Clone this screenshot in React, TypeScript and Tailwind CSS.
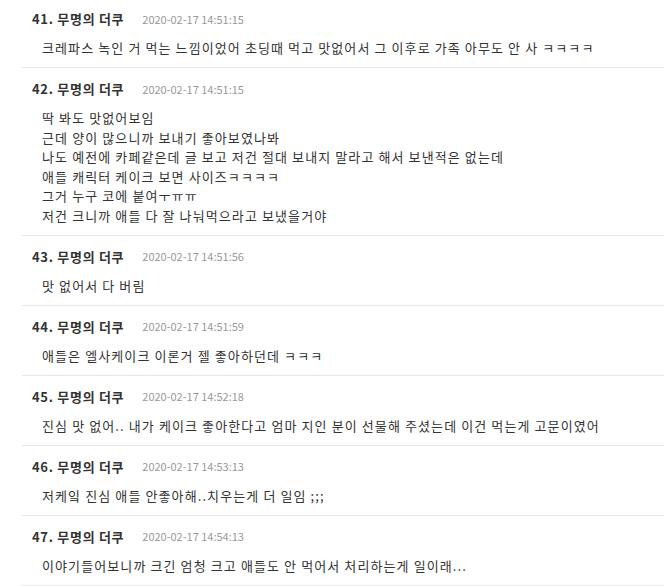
import React from "react";

type Item = { n: number; date: string; lines: string[] };

const items: Item[] = [
  { n: 41, date: "2020-02-17 14:51:15", lines: ["크레파스 녹인 거 먹는 느낌이었어 초딩때 먹고 맛없어서 그 이후로 가족 아무도 안 사 ㅋㅋㅋㅋ"] },
  {
    n: 42,
    date: "2020-02-17 14:51:15",
    lines: [
      "딱 봐도 맛없어보임",
      "근데 양이 많으니까 보내기 좋아보였나봐",
      "나도 예전에 카페같은데 글 보고 저건 절대 보내지 말라고 해서 보낸적은 없는데",
      "애들 캐릭터 케이크 보면 사이즈ㅋㅋㅋㅋ",
      "그거 누구 코에 붙여ㅜㅠㅠ",
      "저건 크니까 애들 다 잘 나눠먹으라고 보냈을거야",
    ],
  },
  { n: 43, date: "2020-02-17 14:51:56", lines: ["맛 없어서 다 버림"] },
  { n: 44, date: "2020-02-17 14:51:59", lines: ["애들은 엘사케이크 이론거 젤 좋아하던데 ㅋㅋㅋ"] },
  { n: 45, date: "2020-02-17 14:52:18", lines: ["진심 맛 없어.. 내가 케이크 좋아한다고 엄마 지인 분이 선물해 주셨는데 이건 먹는게 고문이였어"] },
  { n: 46, date: "2020-02-17 14:53:13", lines: ["저케잌 진심 애들 안좋아해..치우는게 더 일임 ;;;"] },
  { n: 47, date: "2020-02-17 14:54:13", lines: ["이야기들어보니까 크긴 엄청 크고 애들도 안 먹어서 처리하는게 일이래..."] },
];

export default function App() {
  return (
    <div
      className="w-[664px] h-[586px] overflow-hidden bg-white"
      style={{ fontFamily: '"Noto Sans CJK KR", "Noto Sans", sans-serif' }}
    >
      <div className="ml-[22px]">
        {items.map((it, i) => (
          <div
            key={it.n}
            className={`border-b border-[#e8e8e8] pb-[9.5px] ${i === 0 ? "pt-[9px]" : "pt-[11px]"}`}
          >
            <div className="flex items-center h-[20px] pl-[10px]">
              <span className="text-[13px] font-bold text-[#333] tracking-[0.7px]">
                {it.n}. 무명의 더쿠
              </span>
              <span className="ml-[18px] text-[11px] text-[#999]">{it.date}</span>
            </div>
            <div className="mt-[9px] pl-[20px] text-[13px] leading-[19.5px] text-[#333] tracking-[1.1px]">
              {it.lines.map((l, j) => (
                <div key={j}>{l}</div>
              ))}
            </div>
          </div>
        ))}
      </div>
    </div>
  );
}
